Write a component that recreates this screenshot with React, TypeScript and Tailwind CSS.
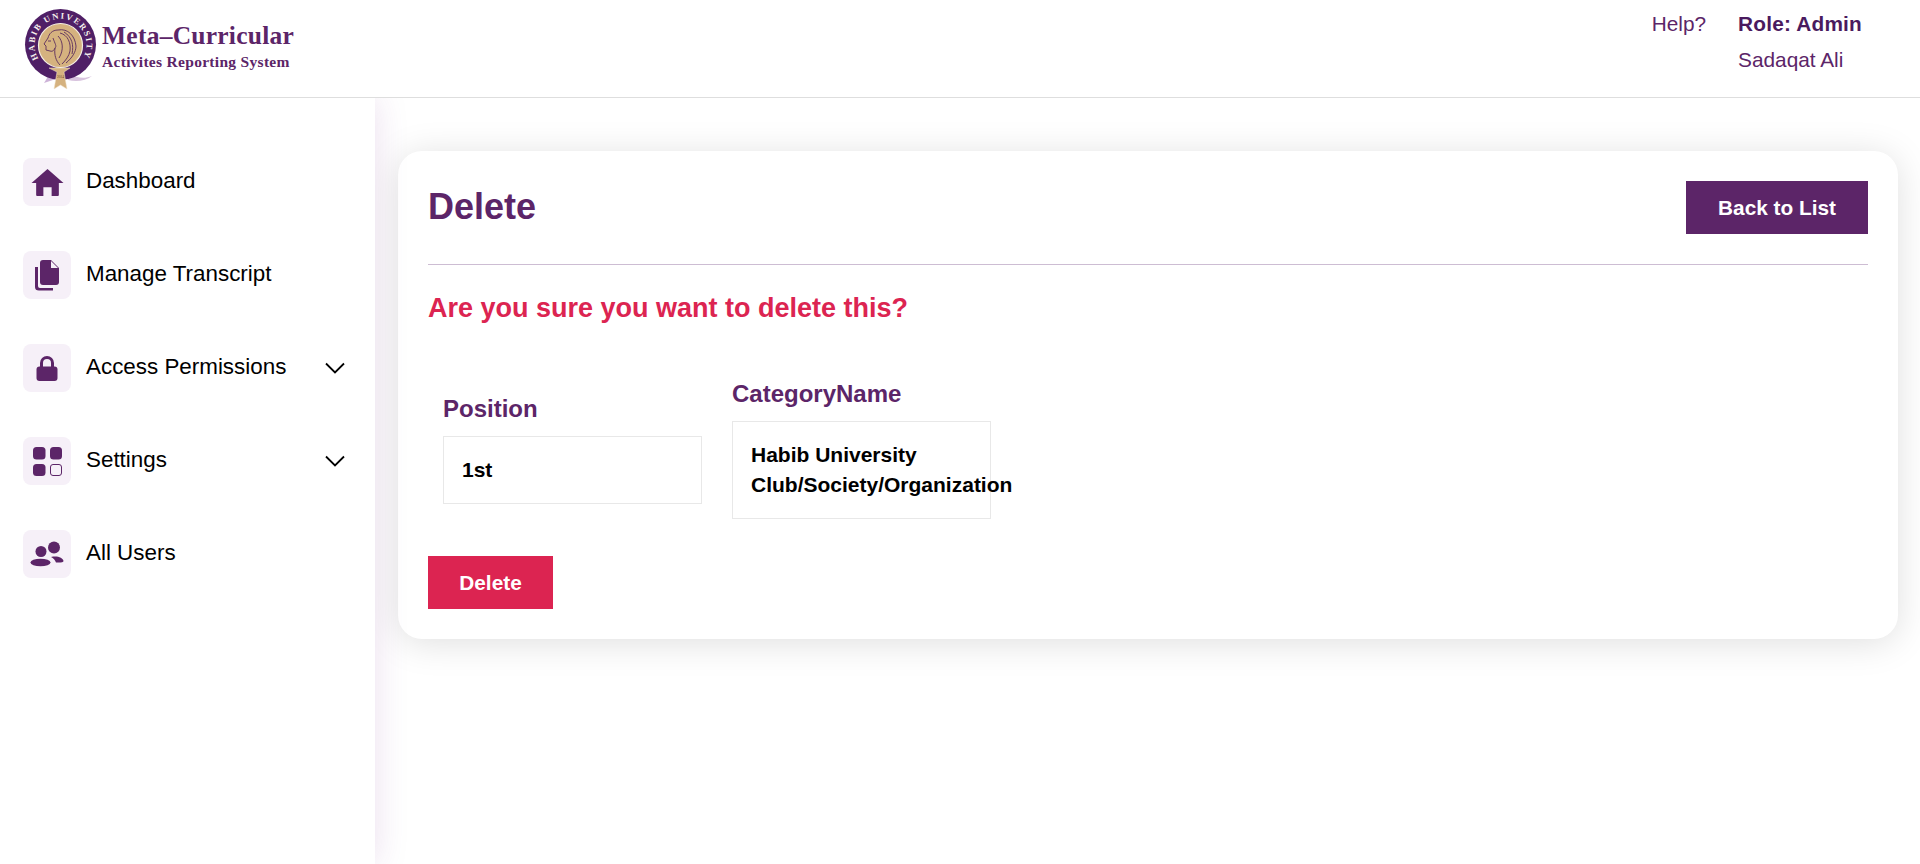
import React from "react";

const P = "#5c2568";

function Logo() {
  return (
    <svg width="78" height="82" viewBox="0 0 78 82" className="shrink-0">
      <path d="M46 66 C56 70 62 71 70 68 C64 73 54 74 46 72 Z" fill="#d8c3de" />
      <path d="M30 62 L22 75 L34 71 Z" fill="#cdb3d8" />
      <circle cx="38.5" cy="36.5" r="35.5" fill="#4f1f66" />
      <circle cx="38.5" cy="37.5" r="22" fill="#d5b27f" stroke="#f5efe2" strokeWidth="1.2" />
      <defs>
        <path id="ring" d="M 16.5 50.5 A 26 26 0 1 1 60.5 50.5" />
      </defs>
      <text fill="#f7f2ee" fontFamily="Liberation Serif, serif" fontSize="8.6" fontWeight="700">
        <textPath href="#ring" textLength="108" lengthAdjust="spacing">HABIB UNIVERSITY</textPath>
      </text>
      <g fill="none" stroke="#5b2c5e" strokeWidth="0.9">
        <path d="M36 22 C30 22 27 26 26 30 L22 36 L24 38 L24 42 L28 43 C31 44 32 42 33 40" />
        <path d="M36 22 C46 20 53 28 54 38 C54 44 50 50 44 55" />
        <path d="M38 25 C46 27 49 35 48 43 C47 48 44 52 40 56" />
        <path d="M42 24 C50 29 52 37 50 46" />
        <path d="M33 40 C32 47 34 53 38 57" />
        <path d="M36 28 C41 33 42 42 37 50" />
        <path d="M31 30 C33 36 35 38 33 40" />
        <path d="M26 33 L29 33" />
      </g>
      <path d="M27 60 L48 60 L42 64 L45 81 L38.5 77 L32 81 L35 64 Z" fill="#d5b27f" stroke="#f0e4cf" strokeWidth="0.5" />
      <text x="38.5" y="70" textAnchor="middle" fontSize="3.6" fill="#6b4a2a" fontFamily="Liberation Serif, serif">2014</text>
    </svg>
  );
}

function IconBox({ children }: { children: React.ReactNode }) {
  return (
    <div className="w-12 h-12 rounded-lg bg-[#f6f0f8] flex items-center justify-center shrink-0">{children}</div>
  );
}

const HomeI = (
  <svg width="33" height="29" viewBox="0 0 32 28" fill={P}>
    <path d="M16 1 L31.5 14.5 L27 14.5 L27 26 Q27 27 26 27 L20 27 L20 18.5 L12 18.5 L12 27 L6 27 Q5 27 5 26 L5 14.5 L0.5 14.5 Z" />
  </svg>
);
const DocI = (
  <svg width="26" height="32" viewBox="0 0 26 32" fill={P}>
    <path d="M1 8 L4 8 L4 27 Q4 29 6 29 L19 29 L19 31.5 L5 31.5 Q1 31.5 1 28 Z" />
    <path d="M9 1 L17 1 L25 9 L25 23 Q25 26 22 26 L9 26 Q6 26 6 23 L6 4 Q6 1 9 1 Z" />
    <path d="M17 2 L17 9 L24 9 Z" fill="#f6f0f8" />
  </svg>
);
const LockI = (
  <svg width="22" height="26" viewBox="0 0 22 26" fill={P}>
    <path d="M4 12 V8 A7 7 0 0 1 18 8 V12 H15 V8 A4 4 0 0 0 7 8 V12 Z" />
    <rect x="0.5" y="11.5" width="21" height="14.5" rx="3" />
  </svg>
);
const GridI = (
  <svg width="30" height="30" viewBox="0 0 30 30" fill={P}>
    <rect x="1" y="1" width="12.5" height="12.5" rx="3.5" />
    <rect x="18" y="1" width="12" height="12.5" rx="3.5" />
    <rect x="1" y="18" width="12.5" height="12" rx="3.5" />
    <rect x="18.5" y="18.5" width="11" height="11" rx="2.5" fill="none" stroke={P} strokeWidth="1" />
  </svg>
);
const UsersI = (
  <svg width="34" height="26" viewBox="0 0 34 26" fill={P}>
    <circle cx="24" cy="6.5" r="6" />
    <circle cx="11" cy="10.5" r="5.5" />
    <path d="M21 16 C27 14.5 33 16.5 33.5 20 C33.5 21.5 30 21.8 26 21.5 C25 19 23.5 17.2 21 16 Z" />
    <ellipse cx="10.5" cy="21.5" rx="10" ry="3.8" />
  </svg>
);

const Chevron = (
  <svg width="20" height="12" viewBox="0 0 20 12" fill="none" stroke="#000" strokeWidth="1.8" className="shrink-0">
    <path d="M1 1.5 L10 10.5 L19 1.5" />
  </svg>
);

const items = [
  { label: "Dashboard", icon: HomeI, chev: false },
  { label: "Manage Transcript", icon: DocI, chev: false },
  { label: "Access Permissions", icon: LockI, chev: true },
  { label: "Settings", icon: GridI, chev: true },
  { label: "All Users", icon: UsersI, chev: false },
];

export default function App() {
  return (
    <div className="h-screen overflow-hidden bg-white flex flex-col font-['Liberation_Sans',Arial,sans-serif]">
      <header className="relative z-20 bg-white h-[98px] shrink-0 border-b border-[#dedede] flex justify-between pl-[22px]">
        <div className="flex items-start pt-[8px] gap-[2px]">
          <Logo />
          <div className="font-['Liberation_Serif',serif] font-bold text-[#5c2568] pt-[12px]">
            <div className="text-[25.5px] leading-[32px] whitespace-nowrap tracking-[0.25px]">Meta–Curricular</div>
            <div className="text-[15.5px] leading-[18px] whitespace-nowrap tracking-[0.3px] mt-[1px]">Activites Reporting System</div>
          </div>
        </div>
        <div className="flex pt-[6px] pr-[58px] text-[20.8px] leading-[36px] text-[#5c2568]">
          <div className="mr-[32px]">Help?</div>
          <div>
            <div className="font-bold text-[#4a1a5e] text-[20.8px] tracking-[0.2px]">Role: Admin</div>
            <div>Sadaqat Ali</div>
          </div>
        </div>
      </header>
      <div className="flex-1 flex min-h-0">
        <aside className="w-[375px] shrink-0 bg-white pt-[60px] pl-[23px] pr-[30px] flex flex-col gap-[45px] shadow-[0_0_32px_rgba(120,40,140,0.15)] z-10">
          {items.map((it) => (
            <div key={it.label} className="flex items-center h-12">
              <IconBox>{it.icon}</IconBox>
              <span className="ml-[15px] mb-[2px] text-[22.4px] text-black flex-1 whitespace-nowrap">{it.label}</span>
              {it.chev && Chevron}
            </div>
          ))}
        </aside>
        <main className="flex-1 min-w-0 pl-[23px] pr-[22px] pt-[53px]">
          <div className="bg-white rounded-[24px] shadow-[0_4px_36px_rgba(0,0,0,0.13)] p-[30px]">
            <div className="flex justify-between items-center pb-[30px] border-b border-[#cdbdd3]">
              <h1 className="text-[36px] leading-[53px] font-bold text-[#5c2568] -translate-y-px">Delete</h1>
              <button className="w-[182px] h-[53px] bg-[#5c2568] text-white font-bold text-[20.8px]">Back to List</button>
            </div>
            <h2 className="text-[27px] leading-[34px] font-bold text-[#dc2451] mt-[26px]">Are you sure you want to delete this?</h2>
            <div className="flex items-center mt-[55px]">
              <div className="w-[289px] px-[15px] shrink-0">
                <div className="text-[24px] leading-[28px] font-bold text-[#5c2568] mb-[13px]">Position</div>
                <div className="h-[68px] border border-[#e8e8e8] px-[18px] flex items-center text-[21px] font-bold text-black">1st</div>
              </div>
              <div className="w-[289px] px-[15px] shrink-0">
                <div className="text-[24px] leading-[28px] font-bold text-[#5c2568] mb-[13px]">CategoryName</div>
                <div className="h-[98px] border border-[#e8e8e8] pl-[18px] flex items-center text-[21px] leading-[30px] font-bold text-black whitespace-nowrap">
                  <div>Habib University<br />Club/Society/Organization</div>
                </div>
              </div>
            </div>
            <button className="mt-[37px] block w-[125px] h-[53px] bg-[#dc2451] text-white font-bold text-[20.8px]">Delete</button>
          </div>
        </main>
      </div>
    </div>
  );
}
